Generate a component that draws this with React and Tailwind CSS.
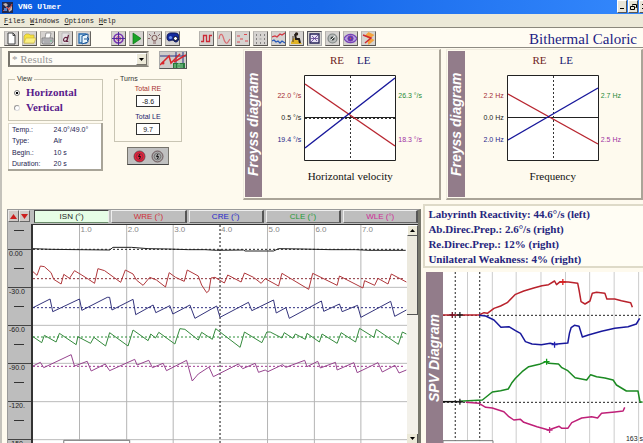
import React from "react";

const SANS = "font-['Liberation_Sans',Arial,sans-serif]";
const SERIF = "font-['Liberation_Serif','Times_New_Roman',serif]";

function Icon({ children }) {
  return (
    <svg viewBox="0 0 13 13" className="block h-[13px] w-[13px]" fill="none" aria-hidden="true">
      {children}
    </svg>
  );
}

const fileTools = [
  ["New", <Icon key="i"><path d="M3 1h5l2 2v9H3z" fill="#fff" stroke="#444" /><path d="M8 1v2.500h2" stroke="#444" /></Icon>],
  ["Open", <Icon key="i"><path d="M1 4l2-2h3l1 1h4v8H1z" fill="#f6e23c" stroke="#c0ac40" strokeWidth=".7" /><path d="M1 11l2-5h10l-2 5z" fill="#fbf084" stroke="#c8b448" strokeWidth=".6" /></Icon>],
  ["Print", <Icon key="i"><path d="M4 6l1-5h5l-1 5" fill="#fff" stroke="#777" strokeWidth=".7" /><path d="M1 6h11v4l-2 2H2l-1-1z" fill="#c4c4c8" stroke="#666" strokeWidth=".7" /><path d="M2 8h9M3 10h6" stroke="#888" strokeWidth=".7" /><path d="M9 9h2" stroke="#6b8" /></Icon>],
  ["Font", <Icon key="i"><path d="M3 1h7v11H3z" fill="#e5e3e4" stroke="#aaa" strokeWidth=".6" /><path d="M8.500 6C6 4.500 4.500 6.500 4.500 8s2 2 3.500 0l1.500-5L7.800 9.500h1.500" stroke="#63223f" strokeWidth="1.200" /></Icon>],
  ["Exit", <Icon key="i"><path d="M2 2h7v9H2z" fill="#c8e4f5" stroke="#276baf" strokeWidth="1.300" /><path d="M5 4l6-2v8l-6 2z" fill="#eaf6fc" stroke="#1d5797" /><path d="M7 7h5M10 5l2 2-2 2" stroke="#1d5797" /></Icon>],
];

const runTools = [
  ["Target", <Icon key="i"><circle cx="6.500" cy="6.500" r="4.500" stroke="#7731b0" strokeWidth="1.600" /><circle cx="6.500" cy="6.500" r="2" stroke="#c2348c" /><path d="M6.500 0v13M0 6.500h13" stroke="#4f2b9e" /></Icon>],
  ["Start", <Icon key="i"><path d="M3 1l8 5.500L3 12z" fill="#18a326" stroke="#087514" strokeWidth=".7" /></Icon>],
  ["Light", <Icon key="i"><circle cx="6.500" cy="6" r="2.600" fill="#ded5cc" stroke="#755" /><path d="M5 9h3M5 11h3M6.500 0v2M1 2l2 2M12 2l-2 2M0 6.500h2M11 6.500h2" stroke="#866" /></Icon>],
  ["Goggles", <Icon key="i"><path d="M1 5c0-3 2-4 4-4h4c3 0 4 2 4 4s-1 5-3 5-2-2-4-2C2 10 1 8 1 5z" fill="#142a9d" stroke="#0b1658" /><circle cx="4.500" cy="5.500" r="1.600" fill="#6b90ed" /><circle cx="9.500" cy="6.500" r="2" fill="#fff" stroke="#112" /></Icon>],
];

const testTools = [
  ["Square wave", <Icon key="i"><path d="M1 9.500h2.500v-6h3v6h3v-6h2.500" stroke="#cb2936" strokeWidth="1.300" /></Icon>],
  ["Sine wave", <Icon key="i"><path d="M1 7c1-7 3.500-5 4.500-1s3 7 4.500 4l2-3" stroke="#d96b70" strokeWidth="1.200" /></Icon>],
  ["Random", <Icon key="i"><path d="M1 4h3M8 2.500h3M4 7h3M1 10h3M9 9h3" stroke="#dc4a50" strokeWidth="1.200" /></Icon>],
  ["Dots", <Icon key="i"><path d="M2 3h1M6 3h1M10 3h1M2 7h1M10 7h1M2 11h1M6 11h1M10 11h1" stroke="#333" strokeWidth="1.200" /><path d="M5.500 7h2" stroke="#999" /></Icon>],
  ["Traces", <Icon key="i"><path d="M0 5l3-1 2 1 3-3 2 1 3-2" stroke="#d3363f" strokeWidth="1.300" /><path d="M0 9l2-1 2 2 2-1 2 2 2-2 3 2" stroke="#2558b9" strokeWidth="1.300" /></Icon>],
  ["Chair", <Icon key="i"><path d="M1 10l3-4 5 3 3 3H1z" fill="#dfb226" /><path d="M5 2l1 5h3l1 4" stroke="#221c18" strokeWidth="2" /><path d="M3 4v6" stroke="#4d3820" /><circle cx="6.500" cy="2" r="1.700" fill="#2b211a" /></Icon>],
  ["Results", <Icon key="i"><path d="M2 2h9v9H2z" fill="#e7e1f4" stroke="#282658" strokeWidth="1.300" /><path d="M3 10l7-7M3 6.500h7M4 4l5 5" stroke="#5a3c91" strokeWidth=".8" /></Icon>],
  ["Eye", <Icon key="i"><circle cx="6.500" cy="6.500" r="4.500" fill="#b9bcbb" stroke="#7f8583" strokeWidth="1.200" /><circle cx="6.500" cy="6.500" r="2" fill="#404745" /><path d="M5 8l4-4" stroke="#eee" /></Icon>],
  ["Pupil", <Icon key="i"><path d="M0 6.500C3 1 10 1 13 6.500 10 12 3 12 0 6.500z" fill="#b4a3e3" stroke="#7743b6" strokeWidth="1.200" /><circle cx="6.500" cy="6.500" r="2.600" fill="#3549c4" stroke="#902f9a" /><circle cx="6.500" cy="6.500" r="1" fill="#e03b52" /></Icon>],
  ["Butterfly", <Icon key="i"><path d="M6.500 0l6 3-4 3 4 2-6 5-1-4 2-2-5-3z" fill="#f4a43e" /><path d="M1 3l8 3-6 5" stroke="#ce2831" strokeWidth="1.500" /></Icon>],
];

function ToolGroup({ tools, pressed }) {
  return (
    <div className="flex gap-[3px]">
      {tools.map(([name, icon]) => (
        <button
          key={name}
          type="button"
          aria-label={name}
          className={
            "flex h-[15px] w-[15px] items-center justify-center border bg-[#d6d3d0] " +
            (name === pressed
              ? "border-[#55555c] border-r-[#aaa] border-b-[#aaa]"
              : "border-t-[#c4c1bc] border-l-[#b4b1ac] border-r-[#66635f] border-b-[#55524e]")
          }
        >
          {icon}
        </button>
      ))}
    </div>
  );
}

function TitleBar() {
  return (
    <header className="flex h-[14px] shrink-0 items-center justify-between overflow-hidden bg-linear-to-r from-[#0a5ce0] via-[#1668ea] to-[#3488fc]">
      <div className="flex items-center gap-[5px] pl-[2px]">
        <svg viewBox="0 0 11 11" className="h-[11px] w-[11px]" aria-hidden="true">
          <path d="M0 0h11v11H0z" fill="#21284c" />
          <path d="M1 2l3-1 2 2-2 2zM6 6l4-2v4l-3 2z" fill="#c5b5ad" />
          <path d="M1 9l4-4 2 3 3-6" stroke="#d84c4b" fill="none" />
          <path d="M2 6h3v3H2z" fill="#5c82c4" />
        </svg>
        <h1 className="font-['Liberation_Mono','Courier_New',monospace] text-[8px] leading-[12px] font-bold text-white">VNG Ulmer</h1>
      </div>
      <div className="-mr-[7px] flex h-[13px] gap-px self-start">
        <button type="button" aria-label="Minimize" className="flex w-[10px] items-end justify-center border border-[#fff] border-r-[#555] border-b-[#555] bg-[#e9e5d8] pb-[3px]">
          <span className="h-px w-[4px] bg-black" />
        </button>
        <button type="button" aria-label="Restore" className="flex w-[10px] items-center justify-center border border-[#fff] border-r-[#555] border-b-[#555] bg-[#e9e5d8]">
          <svg viewBox="0 0 7 7" className="h-[7px] w-[7px]" fill="none" stroke="#000"><path d="M2.500 2.500v-1h4v3h-1M.5 3.500h4v3h-4z" /></svg>
        </button>
        <button type="button" aria-label="Close" className="flex w-[11px] items-center justify-center border border-[#fff] border-r-[#555] border-b-[#555] bg-[#e9e5d8]">
          <svg viewBox="0 0 7 7" className="h-[7px] w-[7px]" fill="none" stroke="#000"><path d="M1 1l5 5M6 1L1 6" /></svg>
        </button>
      </div>
    </header>
  );
}

function MenuBar() {
  return (
    <nav className="flex h-[14px] shrink-0 items-center gap-[5px] border-b border-[#8a877c] bg-[#ece9d8] pt-[2px] pl-[4px] font-['Liberation_Mono','Courier_New',monospace] text-[7px] leading-[11px] text-[#222]">
      {["Files", "Windows", "Options", "Help"].map((m) => (
        <button key={m} type="button" className="first-letter:underline">{m}</button>
      ))}
    </nav>
  );
}

function TurnField({ id, label, value, color }) {
  return (
    <div className="flex flex-col items-center">
      <label htmlFor={id} className={"text-[7px] leading-[12px] " + color}>{label}</label>
      <input id={id} readOnly value={value} className="mb-[4px] h-[12px] w-[24px] border border-[#333] bg-white text-center text-[7px] leading-[10px] text-[#222]" />
    </div>
  );
}

function Controls() {
  return (
    <section className={"flex w-[241px] shrink-0 flex-col pl-[6px] " + SANS}>
      <div className="flex h-[26px] gap-[10px] pt-[2px]">
        <div className="relative h-[16px] w-[141px]">
          <select aria-label="Window" className={"block h-full w-full appearance-none border-2 border-[#77746c] border-r-[#d8d4c8] border-b-[#88857c] bg-[#fffdf6] pl-[2px] text-[11px] leading-[12px] text-[#999] " + SERIF}>
            <option>* Results</option>
          </select>
          <span className="pointer-events-none absolute top-[2px] right-[2px] flex h-[12px] w-[11px] items-center justify-center border border-white border-r-[#77746c] border-b-[#77746c] bg-[#ece9d8]">
            <svg viewBox="0 0 5 3" className="h-[3px] w-[5px]"><path d="M0 0h5L2.500 3z" fill="#000" /></svg>
          </span>
        </div>
        <button type="button" aria-label="Curves" className="h-[18px] w-[28px] border border-[#aaa] border-r-[#555] border-b-[#555] bg-[#cfccca]">
          <svg viewBox="0 0 26 16" className="block h-[16px] w-[26px]" fill="none">
            <path d="M0 4h26M16 0v16M23 0v16" stroke="#2a3282" />
            <path d="M0 13l9-9 2 7L20 2M14 10l12-7" stroke="#d8262c" strokeWidth="1.500" />
            <circle cx="3" cy="11" r="1.500" fill="#d8262c" />
            <path d="M13 11h12v5H13z" fill="#277a3d" />
            <path d="M15 12v4M18 12h2v4h-2zM22 12v4" stroke="#91d49d" />
          </svg>
        </button>
      </div>
      <div className="flex gap-[11px]">
        <div className="w-[95px]">
          <fieldset className="h-[46px] border border-[#c9c5b4] pt-[2px] pl-[5px]">
            <legend className="ml-[1px] px-[2px] text-[7px] leading-[8px] text-[#333]">View</legend>
            {["Horizontal", "Vertical"].map((v, i) => (
              <label key={v} className={"flex h-[15px] items-center gap-[6px] text-[11px] leading-[15px] font-bold text-[#5a1c8c] " + SERIF}>
                <input
                  type="radio"
                  name="view"
                  defaultChecked={i === 0}
                  className="h-[6px] w-[6px] appearance-none rounded-full border border-[#999] border-r-[#ddd] border-b-[#ddd] bg-white checked:border-[#777] checked:bg-[radial-gradient(#000_35%,#fff_45%)]"
                />
                {v}
              </label>
            ))}
          </fieldset>
          <table className="mt-[2px] h-[48px] w-full border border-[#dedacb] border-r-2 border-r-[#a8a498] border-b-2 border-b-[#a8a498] bg-white text-[7px] leading-[11px] text-[#1e2350]">
            <tbody>
              {[["Temp.:", "24.0°/49.0°"], ["Type:", "Air"], ["Begin.:", "10 s"], ["Duration:", "20 s"]].map(([k, v]) => (
                <tr key={k}>
                  <th scope="row" className="w-[45px] p-0 pl-[3px] text-left font-normal">{k}</th>
                  <td className="p-0">{v}</td>
                </tr>
              ))}
            </tbody>
          </table>
        </div>
        <div className="w-[68px]">
          <fieldset className="h-[67px] border border-[#c9c5b4]">
            <legend className="ml-[3px] px-[2px] text-[7px] leading-[8px] text-[#333]">Turns</legend>
            <TurnField id="re" label="Total RE" value="-8.6" color="text-[#a83232]" />
            <TurnField id="le" label="Total LE" value="9.7" color="text-[#22246c]" />
          </fieldset>
          <button type="button" aria-label="Eyes" className="mt-[5px] ml-[13px] flex h-[18px] w-[42px] items-center justify-center gap-[5px] border border-[#77746c] border-b-[#444] bg-[#c0c0c0]">
            {["#e8203c", "#a8a8a8"].map((c) => (
              <svg key={c} viewBox="0 0 13 13" className="h-[13px] w-[13px]">
                <circle cx="6.500" cy="6.500" r="5.500" fill={c} stroke="#5b4044" strokeWidth=".8" />
                <circle cx="6.500" cy="6.500" r="3.300" fill="none" stroke="#444" strokeWidth=".5" />
                <path d="M7 4L5.500 6.500h2L6.500 9" stroke="#111" fill="none" />
              </svg>
            ))}
          </button>
        </div>
      </div>
    </section>
  );
}

function SideTitle({ children }) {
  return (
    <h2 className={"flex w-[17px] shrink-0 rotate-180 items-center justify-center bg-[#927c8a] text-[14px] leading-[17px] font-bold whitespace-nowrap text-white italic [writing-mode:vertical-rl] " + SANS}>
      {children}
    </h2>
  );
}

function Freyss({ name, left, right, red, blue, offset }) {
  return (
    <section className="flex min-w-0 flex-1 border-t border-r-2 border-b-2 border-l border-t-[#f0ecdf] border-r-[#aaa498] border-b-[#aaa498] border-l-[#eeeade] py-px pl-px">
      <SideTitle>Freyss diagram</SideTitle>
      <div className="flex flex-1 flex-col items-center pt-[2px]">
        <div className={"flex gap-[13px] text-[11px] leading-[14px] " + SERIF}>
          <span className="text-[#6e2424]">RE</span>
          <span className="text-[#16166e]">LE</span>
        </div>
        <div className={"mt-[8px] grid w-full grid-cols-[1fr_92px_1fr] text-[7px] leading-[8px] " + SANS}>
          <div className="flex h-[86px] flex-col items-end gap-[14px] pt-[17px] pr-[3px] whitespace-nowrap">
            <span className="text-[#a32c35]">{left[0]}</span>
            <span className="text-[#222]">{left[1]}</span>
            <span className="text-[#25258a]">{left[2]}</span>
          </div>
          <svg viewBox="0 0 92 86" className="h-[86px] w-[92px]" fill="none">
            <path d="M.5 .5h91v85H.5z" fill="#fff" stroke="#222" />
            <path d="M46.500 1v84" stroke="#333" strokeDasharray="2 2" />
            <path d="M1 42.500h90" stroke="#222" />
            {offset && <path d="M1 43.500h90" stroke="#333" strokeDasharray="2 2" />}
            <path d={red} stroke="#b82630" strokeWidth="1.400" />
            <path d={blue} stroke="#17179b" strokeWidth="1.400" />
          </svg>
          <div className="flex h-[86px] flex-col items-start gap-[36px] pt-[17px] pl-[2px] whitespace-nowrap">
            <span className="text-[#278a38]">{right[0]}</span>
            <span className="text-[#a032a3]">{right[1]}</span>
          </div>
        </div>
        <h3 className={"mt-[7px] text-[11px] leading-[16px] text-[#111] " + SERIF}>{name}</h3>
      </div>
    </section>
  );
}

const tabs = [
  ["ISN (°)", "text-[#222]"],
  ["WRE (°)", "text-[#cf2d35]"],
  ["CRE (°)", "text-[#2525c9]"],
  ["CLE (°)", "text-[#1f9a35]"],
  ["WLE (°)", "text-[#cf2a98]"],
];

// Plot units are thirds of a pixel at the default size.
const GRID_X = [235, 376, 515, 655, 797, 937, 1076];
const GRID_Y = [262, 376, 490, 605, 719];
const nystagmus = [
  ["#222", "96,146 150,148 230,149 325,150 335,142 390,142 440,146 500,147 560,149 610,149 645,151 725,150 730,153 815,153 830,146 900,147 985,149 1060,149 1100,151 1210,151"],
  ["#b0383c", "96,215 108,226 118,198 130,200 150,218 158,238 180,252 188,223 205,235 220,212 240,224 262,238 280,250 290,206 310,212 358,247 372,210 395,222 405,240 425,256 445,232 465,240 492,261 503,218 522,232 548,244 557,210 590,228 600,255 615,278 622,272 628,234 640,232 668,249 678,225 718,246 728,219 755,232 778,250 790,236 830,258 840,220 920,268 932,220 1005,256 1012,228 1082,264 1087,242 1117,256 1127,235 1157,252 1167,222 1212,246"],
  ["#34347c", "96,323 147,297 155,335 235,297 242,331 318,292 325,292 332,330 395,298 403,344 455,315 463,338 505,317 514,342 565,315 580,355 645,318 655,352 740,307 750,332 815,300 823,339 852,323 862,355 958,303 965,334 1012,312 1020,335 1066,316 1076,352 1165,304 1177,349 1212,330"],
  ["#358a3d", "96,410 122,428 130,406 165,426 175,400 225,434 230,410 268,430 278,412 313,438 325,398 380,438 395,390 440,422 448,402 462,414 472,397 520,432 535,386 550,388 590,420 600,397 632,418 642,386 715,442 728,396 780,428 795,396 805,396 840,414 847,398 873,415 880,402 910,418 915,400 952,426 960,402 1005,430 1017,398 1060,426 1072,385 1115,412 1122,388 1188,433 1200,396 1212,402"],
  ["#97458f", "96,498 118,487 128,503 210,464 220,498 258,484 270,513 312,492 325,512 400,478 407,495 442,481 453,503 485,490 495,512 555,481 572,543 590,522 622,501 635,530 710,492 723,506 760,490 770,517 790,510 798,515 842,494 852,502 908,481 915,500 947,484 955,504 1000,487 1005,510 1055,488 1065,518 1127,488 1140,516 1178,496 1190,519 1212,510"],
];
const baselines = [["#222", 148], ["#8a3038", 236], ["#303080", 323], ["#2c9038", 411], ["#a03890", 499]];
const thin = { vectorEffect: "non-scaling-stroke" };

function ArrowButton({ label, d }) {
  return (
    <button type="button" aria-label={label} className="flex h-[12px] w-[11px] items-center justify-center border border-[#e8e8e8] border-r-[#666] border-b-[#666] bg-[#cfc9c6]">
      <svg viewBox="0 0 7 5" className="h-[5px] w-[7px]"><path d={d} fill="#cc1f1f" /></svg>
    </button>
  );
}

function Recording() {
  return (
    <section className={"mt-[5px] flex min-w-0 flex-[413] flex-col overflow-hidden border-t border-r-[3px] border-l border-[#999] border-r-[#77776c] bg-[#bdbdbd] " + SANS}>
      <div className="flex h-[14px] shrink-0 gap-[2px]">
        <div className="flex w-[24px] shrink-0">
          <ArrowButton label="Up" d="M0 5h7L3.500 0z" />
          <ArrowButton label="Down" d="M0 0h7L3.500 5z" />
        </div>
        <div className="grid flex-1 grid-cols-5 gap-[2px]">
          {tabs.map(([t, c], i) => (
            <button
              key={t}
              type="button"
              className={
                "h-[13px] border text-[8px] leading-[10px] " + c +
                (i === 0
                  ? " border-[#444] border-r-[#eee] border-b-[#6c8c6c] bg-[#e6fde6]"
                  : " border-[#eee] border-r-2 border-r-[#555] border-b-[#666] bg-[#bebebe]")
              }
            >
              {t}
            </button>
          ))}
        </div>
      </div>
      <div className="flex min-h-0 flex-1">
        <div className="w-[23px] shrink-0 overflow-hidden text-[7px] leading-[8px] text-[#222]">
          <div className="h-[25px] pt-[6px] pl-[6px]"><span className="block h-px w-[10px] bg-[#333]" /></div>
          {["0.00", "-30.0", "-60.0", "-90.0", "-120.", "-150."].map((v) => (
            <div key={v} className="h-[38px] border-t border-[#444] pl-px">
              <span className="block">{v}</span>
              <span className="mt-[10px] ml-[5px] block h-px w-[10px] bg-[#333]" />
            </div>
          ))}
        </div>
        <div className="relative flex-1 overflow-hidden border-t border-l-2 border-[#333] bg-white">
          <svg viewBox="96 75 1119 657" preserveAspectRatio="none" className="block h-[219px] w-full" fill="none">
            {GRID_Y.map((y) => <path key={y} d={`M96 ${y}h1119`} stroke="#bbb" style={thin} />)}
            {GRID_X.map((x) => (
              <path key={x} d={`M${x} 75v657`} style={thin} stroke={x === 655 ? "#111" : "#b4b4b4"} strokeDasharray={x === 655 ? "2 2" : "none"} />
            ))}
            {baselines.map(([c, y]) => <path key={y} d={`M96 ${y}h1112`} stroke={c} strokeDasharray="2 2" style={thin} />)}
            {nystagmus.map(([c, p]) => <polyline key={c} points={p} stroke={c} style={thin} />)}
            <path d="M188 732v-11h197v11" fill="#fff" stroke="#777" style={thin} />
          </svg>
          {GRID_X.map((x, i) => (
            <span key={x} className="absolute top-[1px] pl-px text-[8px] leading-[8px] text-[#888]" style={{ left: `${((x - 96) / 1119) * 100}%` }}>
              {i + 1}.0
            </span>
          ))}
        </div>
        <div className="flex w-[11px] shrink-0 flex-col border-t border-[#333] bg-[#f3f1ea]">
          <button type="button" aria-label="Scroll up" className="flex h-[11px] shrink-0 items-center justify-center border border-white border-r-[#555] border-b-[#555] bg-[#ece9d8]">
            <svg viewBox="0 0 5 3" className="h-[3px] w-[5px]"><path d="M0 3h5L2.500 0z" fill="#000" /></svg>
          </button>
          <div className="h-[79px] border-r border-b border-[#555] bg-[#ece9de]" />
          <div className="flex-1" />
          <button type="button" aria-label="Scroll down" className="flex h-[9px] shrink-0 items-center justify-center border-r border-[#555] bg-[#ece9d8]">
            <svg viewBox="0 0 5 3" className="h-[3px] w-[5px]"><path d="M0 0h5L2.500 3z" fill="#000" /></svg>
          </button>
        </div>
      </div>
    </section>
  );
}

const spv = [
  ["#b9222c", "81,345 190,345 205,338 215,340 235,325 255,318 275,308 300,283 325,273 355,264 380,257 400,254 418,243 424,254 435,245 460,246 488,250 492,270 498,305 510,312 525,303 532,280 545,277 570,280 576,297 600,297 620,302 648,308 653,322"],
  ["#18189c", "190,346 210,348 235,360 256,382 280,380 300,392 315,400 330,425 350,432 378,434 405,430 418,433 458,429 463,400 468,383 478,376 492,379 502,411 520,405 560,394 600,385 640,380 665,372 675,355"],
  ["#1b8a22", "130,604 200,600 215,588 230,576 255,572 278,567 288,550 300,535 320,515 340,500 372,493 392,485 400,490 430,492 440,503 458,512 480,533 515,540 527,524 545,530 570,534 595,540 605,555 635,573 670,573 676,605 684,607"],
  ["#bf2078", "150,607 190,610 210,622 230,624 265,635 280,650 295,660 315,658 325,667 365,680 400,690 432,679 440,685 458,685 470,668 500,654 530,650 548,654 560,640 600,636 625,633 630,622"],
];
const marks = [[443, 246, "#d82020"], [418, 434, "#2020b0"], [394, 485, "#109a18"], [403, 690, "#c02880"], [132, 345, "#222"], [109, 345, "#701020"], [132, 605, "#222"]];

function Spv() {
  return (
    <section className="mt-[4px] ml-[3px] flex min-h-0 flex-1 overflow-hidden">
      <div className="flex h-[172px] w-[17px] shrink-0 items-stretch">
        <SideTitle>SPV Diagram</SideTitle>
      </div>
      <div className="relative min-w-0 flex-1 bg-white">
        <svg viewBox="81 216 603 516" preserveAspectRatio="none" className="block h-[172px] w-full" fill="none">
          {[155, 230, 302, 377, 451, 524, 598, 672].map((x) => <path key={x} d={`M${x} 216v516`} stroke="#ccc" style={thin} />)}
          {[118, 192].map((x) => <path key={x} d={`M${x} 216v516`} stroke="#222" strokeDasharray="2 2" style={thin} />)}
          {[346, 607].map((y) => <path key={y} d={`M81 ${y}h603`} stroke="#222" strokeDasharray="2 2" style={thin} />)}
          <path d="M81 605h60" stroke="#111" strokeWidth="1.500" style={thin} />
          {spv.map(([c, p]) => <polyline key={c} points={p} stroke={c} strokeWidth="1.500" strokeLinejoin="round" style={thin} />)}
          {marks.map(([x, y, c]) => <path key={`${x}-${y}`} d={`M${x - 9} ${y}h18M${x} ${y - 9}v18`} stroke={c} strokeWidth="1.300" style={thin} />)}
          <path d="M81 722h151v10H81z" fill="#fff" stroke="#777" style={thin} />
        </svg>
        <span className={"absolute right-0 bottom-0 text-[7px] leading-[8px] text-[#222] " + SANS}>163 s</span>
      </div>
    </section>
  );
}

export default function App() {
  return (
    <div className="flex h-screen flex-col overflow-hidden bg-[#fefaee]">
      <TitleBar />
      <MenuBar />
      <div className="flex h-[20px] shrink-0 items-center border-b border-[#8f8c84] bg-[#fffcf2] pt-[2px] pr-[6px] pl-[4px]">
        <ToolGroup tools={fileTools} />
        <div className="w-[20px]" />
        <ToolGroup tools={runTools} />
        <div className="w-[19px]" />
        <ToolGroup tools={testTools} pressed="Results" />
        <h2 className={"ml-auto text-[15px] leading-[16px] whitespace-nowrap text-[#1c1c84] " + SERIF}>Bithermal Caloric</h2>
      </div>
      <main className="flex min-h-0 flex-1 flex-col border-l-2 border-[#c4c2bb]">
        <div className="flex h-[156px] shrink-0 pt-[1px]">
          <Controls />
          <div className="flex h-[151px] min-w-0 flex-1 gap-[5px]">
            <Freyss
              name="Horizontal velocity"
              left={["22.0 °/s", "0.5 °/s", "19.4 °/s"]}
              right={["26.3 °/s", "18.3 °/s"]}
              red="M1 9L91 71"
              blue="M1 73L91 3"
              offset
            />
            <Freyss
              name="Frequency"
              left={["2.2 Hz", "0.0 Hz", "2.0 Hz"]}
              right={["2.7 Hz", "2.5 Hz"]}
              red="M1 19L91 69"
              blue="M1 65L91 13"
            />
          </div>
        </div>
        <div className="flex min-h-0 flex-1 gap-[2px] pl-[5px]">
          <Recording />
          <div className="flex min-w-0 flex-[221] flex-col">
            <section className={"h-[64px] shrink-0 border-2 border-r-0 border-[#dedac8] bg-[#fffdf4] pt-px pl-[3px] text-[11px] leading-[15px] font-bold whitespace-nowrap text-[#26267e] " + SERIF}>
              <p>Labyrinth Reactivity: 44.6°/s (left)</p>
              <p>Ab.Direc.Prep.: 2.6°/s (right)</p>
              <p>Re.Direc.Prep.: 12% (right)</p>
              <p>Unilateral Weakness: 4% (right)</p>
            </section>
            <Spv />
          </div>
        </div>
      </main>
    </div>
  );
}
